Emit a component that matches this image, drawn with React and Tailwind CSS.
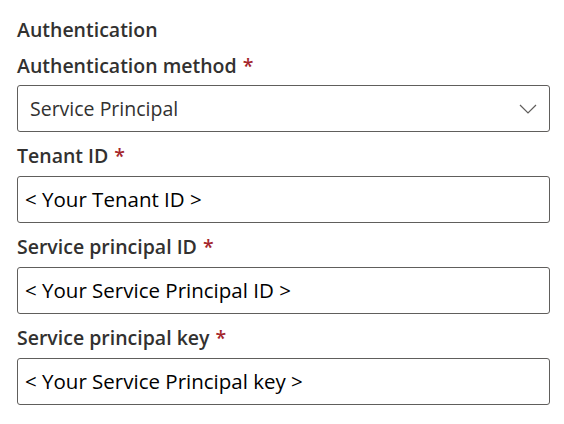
import React from 'react';

const font = { fontFamily: '"Open Sans", "Noto Sans", sans-serif' };

const Label = ({ children, className = '' }) => (
  <div className={`h-[28px] flex items-center text-[19.5px] font-semibold text-[#323130] ${className}`}>
    {children}
    <span className="ml-[6px] text-[#a4262c]">*</span>
  </div>
);

const TextField = ({ value }) => (
  <div className="h-[47px] w-[533px] flex items-center px-[7px] border border-[#605e5c] rounded-[3px] bg-white text-[20.5px] text-black">
    {value}
  </div>
);

export default function App() {
  return (
    <div className="w-[564px] h-[424px] bg-white pl-[17px] pt-[16px]" style={font}>
      <div className="h-[28px] flex items-center text-[19.5px] font-semibold text-[#323130]">
        Authentication
      </div>
      <Label className="mt-[8px]">Authentication method</Label>
      <div className="mt-[5px] h-[47px] w-[533px] flex items-center justify-between pl-[12px] pr-[12px] border border-[#605e5c] rounded-[3px] bg-white">
        <span className="text-[19.5px] text-[#323130]">Service Principal</span>
        <svg width="18" height="10" viewBox="0 0 18 10" fill="none">
          <path d="M1 1 L9 9 L17 1" stroke="#605e5c" strokeWidth="1.2" />
        </svg>
      </div>
      <Label className="mt-[10px]">Tenant ID</Label>
      <div className="mt-[6px]">
        <TextField value="< Your Tenant ID >" />
      </div>
      <Label className="mt-[10px]">Service principal ID</Label>
      <div className="mt-[6px]">
        <TextField value="< Your Service Principal ID >" />
      </div>
      <Label className="mt-[10px]">Service principal key</Label>
      <div className="mt-[6px]">
        <TextField value="< Your Service Principal key >" />
      </div>
    </div>
  );
}
